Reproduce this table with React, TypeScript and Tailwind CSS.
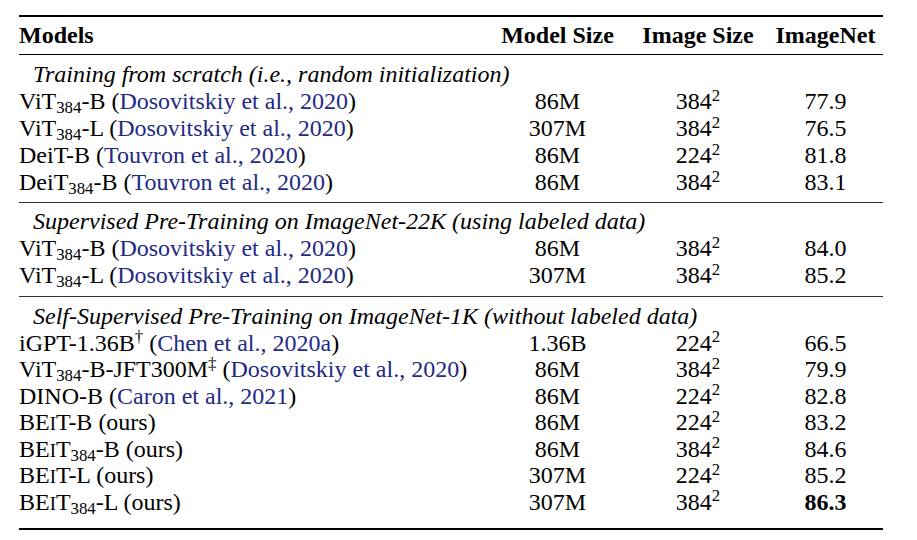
import type { ReactNode } from "react";

type Row = {
	name: ReactNode;
	cite?: string;
	size: string;
	res: string;
	acc: string;
	best?: boolean;
};

type Section = {
	title: string;
	rows: Row[];
	pad: string;
};

const Sub = ({ children }: { children: ReactNode }) => (
	<sub className="text-[0.7em]">{children}</sub>
);

const Beit = ({ sub }: { sub?: boolean }) => (
	<>
		BE<span className="text-[0.78em] leading-none">I</span>T
		{sub && <Sub>384</Sub>}
	</>
);

const sections: Section[] = [
	{
		title: "Training from scratch (i.e., random initialization)",
		pad: "pt-[6px] pb-[6px] leading-[27px]",
		rows: [
			{ name: <>ViT<Sub>384</Sub>-B</>, cite: "Dosovitskiy et al., 2020", size: "86M", res: "384", acc: "77.9" },
			{ name: <>ViT<Sub>384</Sub>-L</>, cite: "Dosovitskiy et al., 2020", size: "307M", res: "384", acc: "76.5" },
			{ name: "DeiT-B", cite: "Touvron et al., 2020", size: "86M", res: "224", acc: "81.8" },
			{ name: <>DeiT<Sub>384</Sub>-B</>, cite: "Touvron et al., 2020", size: "86M", res: "384", acc: "83.1" },
		],
	},
	{
		title: "Supervised Pre-Training on ImageNet-22K (using labeled data)",
		pad: "pt-[5px] pb-[7px] leading-[27px]",
		rows: [
			{ name: <>ViT<Sub>384</Sub>-B</>, cite: "Dosovitskiy et al., 2020", size: "86M", res: "384", acc: "84.0" },
			{ name: <>ViT<Sub>384</Sub>-L</>, cite: "Dosovitskiy et al., 2020", size: "307M", res: "384", acc: "85.2" },
		],
	},
	{
		title: "Self-Supervised Pre-Training on ImageNet-1K (without labeled data)",
		pad: "pt-[6px] pb-[13px] leading-[26.5px]",
		rows: [
			{ name: <>iGPT-1.36B<sup className="text-[0.7em]">†</sup></>, cite: "Chen et al., 2020a", size: "1.36B", res: "224", acc: "66.5" },
			{ name: <>ViT<Sub>384</Sub>-B-JFT300M<sup className="text-[0.7em]">‡</sup></>, cite: "Dosovitskiy et al., 2020", size: "86M", res: "384", acc: "79.9" },
			{ name: "DINO-B", cite: "Caron et al., 2021", size: "86M", res: "224", acc: "82.8" },
			{ name: <><Beit />-B (ours)</>, size: "86M", res: "224", acc: "83.2" },
			{ name: <><Beit sub />-B (ours)</>, size: "86M", res: "384", acc: "84.6" },
			{ name: <><Beit />-L (ours)</>, size: "307M", res: "224", acc: "85.2" },
			{ name: <><Beit sub />-L (ours)</>, size: "307M", res: "384", acc: "86.3", best: true },
		],
	},
];

const cols = "grid grid-cols-[468px_141px_140px_115px]";

export default function App() {
	return (
		<div className="min-h-screen bg-white pt-[15px] pl-[19px] text-black font-['Liberation_Serif',serif] text-[24px] leading-[27px]">
			<div className="w-[864px]">
				<div className="h-[2px] bg-black" />
				<div className={`${cols} font-bold py-[5px]`}>
					<div>Models</div>
					<div className="text-center">Model Size</div>
					<div className="text-center">Image Size</div>
					<div className="text-center">ImageNet</div>
				</div>
				<div className="h-px bg-black" />
				{sections.map((section, i) => (
					<div key={section.title}>
						<div className={section.pad}>
							<div className="italic pl-[14px]">{section.title}</div>
							{section.rows.map((row, j) => (
								<div key={j} className={cols}>
									<div className="whitespace-nowrap">
										{row.name}
										{row.cite && (
											<>
												{" "}(<span className="text-[#1f2a84]">{row.cite}</span>)
											</>
										)}
									</div>
									<div className="text-center">{row.size}</div>
									<div className="text-center">
										{row.res}
										<sup className="text-[0.7em]">2</sup>
									</div>
									<div className={row.best ? "text-center font-bold" : "text-center"}>
										{row.acc}
									</div>
								</div>
							))}
						</div>
						{i < sections.length - 1 ? (
							<div className="h-px bg-[#333]" />
						) : (
							<div className="h-[2px] bg-black" />
						)}
					</div>
				))}
			</div>
		</div>
	);
}
